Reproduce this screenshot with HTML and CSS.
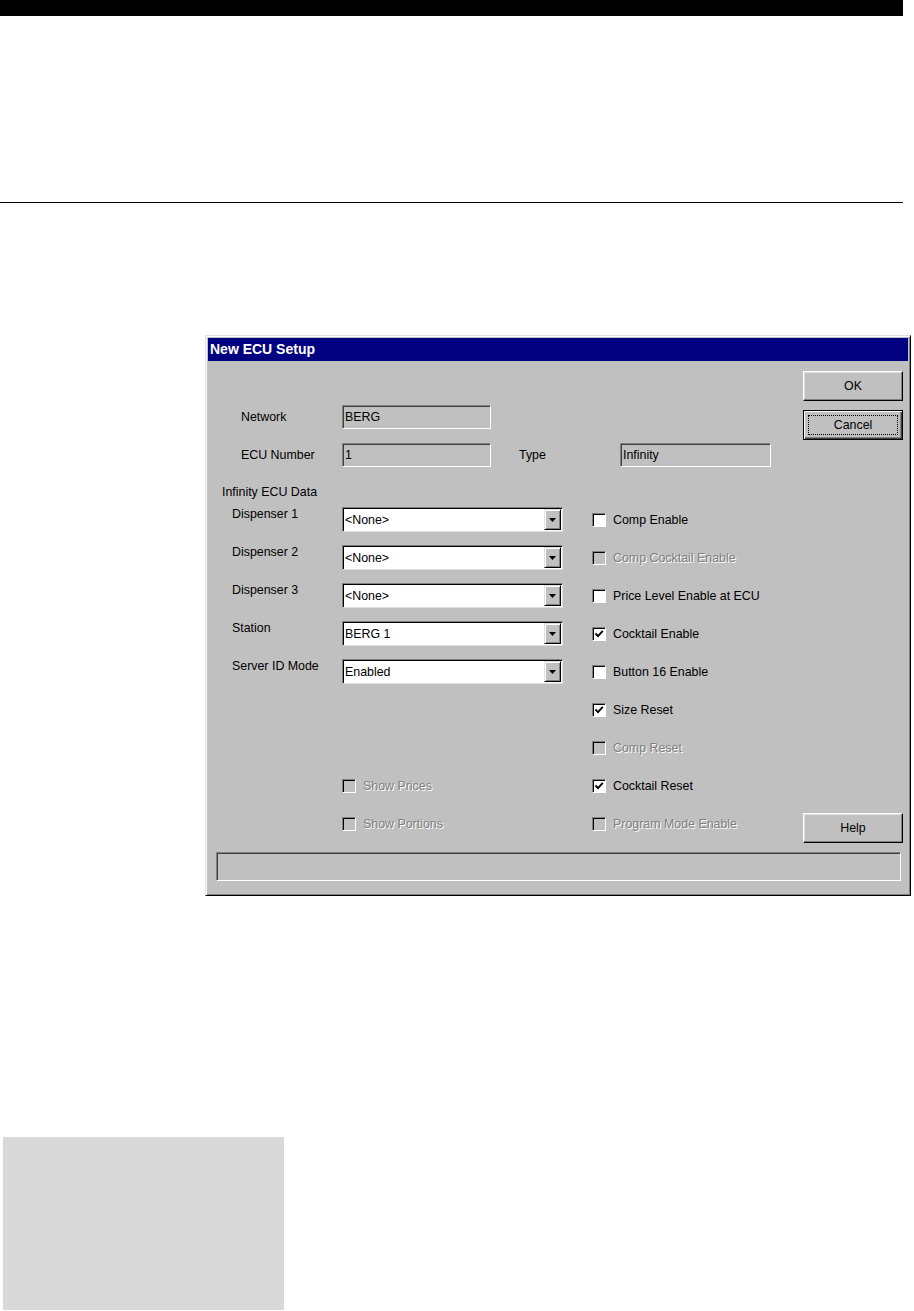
FILE: index.html
```html
<!DOCTYPE html>
<html>
<head>
  <title>New ECU Setup</title>
  <link rel="stylesheet" href="styles.css">
</head>
<body>
  <div class="top-bar"></div>
  <div class="rule"></div>

  <div class="dialog">
    <div class="title-bar">New ECU Setup</div>
    <div class="dialog-body">
      <div class="top-section">
        <div class="id-fields">
          <div class="field-row">
            <span class="label">Network</span>
            <div class="readonly short">BERG</div>
          </div>
          <div class="field-row">
            <span class="label">ECU Number</span>
            <div class="readonly short">1</div>
            <span class="type-label">Type</span>
            <div class="readonly type-field">Infinity</div>
          </div>
        </div>
        <div class="button-column">
          <button class="btn">OK</button>
          <button class="btn default"><span class="focus">Cancel</span></button>
        </div>
      </div>

      <div class="group-label">Infinity ECU Data</div>

      <div class="rows">
        <div class="row">
          <span class="row-label">Dispenser 1</span>
          <div class="combo"><span class="combo-text">&lt;None&gt;</span><span class="combo-btn"><svg width="7" height="4" viewBox="0 0 7 4"><polygon points="0,0 7,0 3.5,4" fill="#000"/></svg></span></div>
          <label class="check"><span class="box"></span>Comp Enable</label>
        </div>
        <div class="row">
          <span class="row-label">Dispenser 2</span>
          <div class="combo"><span class="combo-text">&lt;None&gt;</span><span class="combo-btn"><svg width="7" height="4" viewBox="0 0 7 4"><polygon points="0,0 7,0 3.5,4" fill="#000"/></svg></span></div>
          <label class="check disabled"><span class="box"></span>Comp Cocktail Enable</label>
        </div>
        <div class="row">
          <span class="row-label">Dispenser 3</span>
          <div class="combo"><span class="combo-text">&lt;None&gt;</span><span class="combo-btn"><svg width="7" height="4" viewBox="0 0 7 4"><polygon points="0,0 7,0 3.5,4" fill="#000"/></svg></span></div>
          <label class="check"><span class="box"></span>Price Level Enable at ECU</label>
        </div>
        <div class="row">
          <span class="row-label">Station</span>
          <div class="combo"><span class="combo-text">BERG 1</span><span class="combo-btn"><svg width="7" height="4" viewBox="0 0 7 4"><polygon points="0,0 7,0 3.5,4" fill="#000"/></svg></span></div>
          <label class="check"><span class="box"><svg width="10" height="10" viewBox="0 0 10 10"><path d="M1.5 4.5 L4 7.2 L8.8 1.8" stroke="#000" stroke-width="1.9" fill="none"/></svg></span>Cocktail Enable</label>
        </div>
        <div class="row">
          <span class="row-label">Server ID Mode</span>
          <div class="combo"><span class="combo-text">Enabled</span><span class="combo-btn"><svg width="7" height="4" viewBox="0 0 7 4"><polygon points="0,0 7,0 3.5,4" fill="#000"/></svg></span></div>
          <label class="check"><span class="box"></span>Button 16 Enable</label>
        </div>
        <div class="row">
          <div class="spacer-wide"></div>
          <label class="check"><span class="box"><svg width="10" height="10" viewBox="0 0 10 10"><path d="M1.5 4.5 L4 7.2 L8.8 1.8" stroke="#000" stroke-width="1.9" fill="none"/></svg></span>Size Reset</label>
        </div>
        <div class="row">
          <div class="spacer-wide"></div>
          <label class="check disabled"><span class="box"></span>Comp Reset</label>
        </div>
        <div class="row">
          <div class="spacer"></div>
          <div class="left-cell"><label class="check disabled"><span class="box"></span>Show Prices</label></div>
          <label class="check"><span class="box"><svg width="10" height="10" viewBox="0 0 10 10"><path d="M1.5 4.5 L4 7.2 L8.8 1.8" stroke="#000" stroke-width="1.9" fill="none"/></svg></span>Cocktail Reset</label>
        </div>
        <div class="row last-row">
          <div class="spacer"></div>
          <div class="left-cell"><label class="check disabled"><span class="box"></span>Show Portions</label></div>
          <label class="check disabled"><span class="box"></span>Program Mode Enable</label>
          <button class="btn help-btn">Help</button>
        </div>
      </div>

      <div class="status-bar"></div>
    </div>
  </div>

  <div class="note-box"></div>
</body>
</html>
```

FILE: styles.css
```css
/* Page */
body {
  margin: 0;
  background: #fff;
  font-family: "Liberation Sans", Arial, sans-serif;
}
.top-bar {
  width: 903px;
  height: 16px;
  background: #000;
}
.rule {
  width: 903px;
  margin-top: 186px;
  border-top: 1px solid #000;
}
.note-box {
  width: 281px;
  height: 173px;
  margin: 241px 0 0 3px;
  background: #d9d9d9;
}

/* Dialog frame */
.dialog {
  box-sizing: border-box;
  width: 706px;
  height: 561px;
  margin: 132px 0 0 205px;
  padding: 2px;
  background: #c0c0c0;
  border: 1px solid;
  border-color: #dfdfdf #000 #000 #dfdfdf;
  box-shadow: inset 1px 1px #fff, inset -1px -1px #808080;
  font-size: 12.4px;
  color: #000;
}
.title-bar {
  height: 23px;
  line-height: 23px;
  padding-left: 2px;
  background: #000080;
  color: #fff;
  font-weight: bold;
  font-size: 14px;
}
.dialog-body {
  padding: 10px 5px 12px 8px;
}

/* Top part: id fields and OK / Cancel */
.top-section {
  display: flex;
  height: 96px;
}
.id-fields {
  flex: 1;
  padding-top: 34px;
  display: flex;
  flex-direction: column;
  gap: 14px;
}
.field-row {
  display: flex;
  align-items: center;
  height: 24px;
}
.label {
  box-sizing: border-box;
  width: 126px;
  padding-left: 25px;
}
.readonly {
  box-sizing: border-box;
  height: 24px;
  display: flex;
  align-items: center;
  padding-left: 2px;
  border: 1px solid;
  border-color: #808080 #fff #fff #808080;
  box-shadow: inset 1px 1px #404040;
}
.short {
  width: 149px;
}
.type-label {
  width: 101px;
  margin-left: 28px;
}
.type-field {
  width: 151px;
}
.button-column {
  display: flex;
  flex-direction: column;
  gap: 9px;
}

/* Buttons */
.btn {
  box-sizing: border-box;
  width: 100px;
  height: 30px;
  padding: 0;
  background: #c0c0c0;
  border: 1px solid;
  border-color: #fff #000 #000 #fff;
  box-shadow: inset -1px -1px #808080, inset 1px 1px #dfdfdf;
  font-family: inherit;
  font-size: 12.4px;
  color: #000;
}
.btn.default {
  border: 1px solid #000;
  box-shadow: inset 1px 1px #fff, inset -1px -1px #404040, inset -2px -2px #808080;
  padding: 4px;
}
.focus {
  display: flex;
  align-items: center;
  justify-content: center;
  height: 100%;
  box-sizing: border-box;
  border: 1px dotted #000;
}

/* Combo + checkbox rows */
.group-label {
  margin-top: 18px;
  margin-bottom: 8px;
  padding-left: 6px;
  line-height: 14px;
}
.rows {
  display: flex;
  flex-direction: column;
  gap: 13px;
}
.row {
  display: flex;
  align-items: center;
  height: 25px;
}
.row-label {
  box-sizing: border-box;
  width: 126px;
  padding-left: 16px;
  align-self: flex-start;
  line-height: 14px;
}
.combo {
  box-sizing: border-box;
  display: flex;
  width: 221px;
  height: 25px;
  padding: 1px;
  background: #fff;
  border: 1px solid;
  border-color: #808080 #dfdfdf #dfdfdf #808080;
  box-shadow: inset 1px 1px #000;
}
.combo-text {
  flex: 1;
  display: flex;
  align-items: center;
  padding-left: 1px;
}
.combo-btn {
  box-sizing: border-box;
  width: 17px;
  display: flex;
  align-items: center;
  justify-content: center;
  background: #c0c0c0;
  border: 1px solid;
  border-color: #dfdfdf #000 #000 #dfdfdf;
  box-shadow: inset 1px 1px #fff, inset -1px -1px #808080;
}
.check {
  display: flex;
  align-items: center;
  margin-left: 29px;
}
.left-cell .check {
  margin-left: 0;
}
.box {
  box-sizing: border-box;
  width: 14px;
  height: 14px;
  margin-right: 7px;
  display: flex;
  align-items: center;
  justify-content: center;
  background: #fff;
  border: 1px solid;
  border-color: #808080 #fff #fff #808080;
  box-shadow: inset 1px 1px #000;
}
.check.disabled {
  color: #808080;
  text-shadow: 1px 1px 0 #fff;
}
.check.disabled .box {
  background: #c0c0c0;
}
.spacer {
  width: 126px;
}
.spacer-wide {
  width: 347px;
}
.left-cell {
  width: 221px;
}
.last-row {
  height: 32px;
  align-items: flex-start;
}
.last-row .check {
  height: 25px;
}
.help-btn {
  margin-left: auto;
  margin-top: 2px;
}
.status-bar {
  box-sizing: border-box;
  height: 29px;
  margin: 9px 2px 0 0;
  border: 1px solid;
  border-color: #808080 #fff #fff #808080;
  box-shadow: inset 1px 1px #404040;
}
```
